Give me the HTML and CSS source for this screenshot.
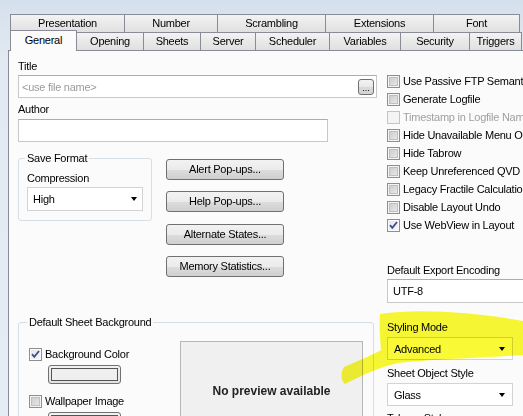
FILE: index.html
```html
<!DOCTYPE html>
<html>
<head>
<meta charset="utf-8">
<link rel="stylesheet" href="styles.css">
</head>
<body>
<div class="window">
  <div class="tabstrip">
    <div class="tabrow">
      <div class="tab t-pres">Presentation</div>
      <div class="tab t-num">Number</div>
      <div class="tab t-scr">Scrambling</div>
      <div class="tab t-ext">Extensions</div>
      <div class="tab t-font">Font</div>
    </div>
    <div class="tabrow">
      <div class="tab t-gen selected">General</div>
      <div class="tab t-open">Opening</div>
      <div class="tab t-sheets">Sheets</div>
      <div class="tab t-server">Server</div>
      <div class="tab t-sched">Scheduler</div>
      <div class="tab t-vars">Variables</div>
      <div class="tab t-sec">Security</div>
      <div class="tab t-trig">Triggers</div>
    </div>
  </div>

  <div class="panel">
    <div class="col-left">
      <div class="label l-title">Title</div>
      <div class="input input-title">
        <span class="placeholder">&lt;use file name&gt;</span>
        <span class="dots-btn">...</span>
      </div>
      <div class="label l-author">Author</div>
      <div class="input input-author"></div>

      <div class="mid-row">
        <fieldset class="group g-save">
          <legend>Save Format</legend>
          <div class="label l-comp">Compression</div>
          <div class="combo combo-high"><span>High</span><span class="arrow"></span></div>
        </fieldset>
        <div class="btn-col">
          <div class="btn">Alert Pop-ups...</div>
          <div class="btn b2">Help Pop-ups...</div>
          <div class="btn b3">Alternate States...</div>
          <div class="btn b2">Memory Statistics...</div>
        </div>
      </div>

      <fieldset class="group g-bg">
        <legend>Default Sheet Background</legend>
        <div class="bg-inner">
          <div class="bg-left">
            <div class="cbrow"><span class="cb checked"><svg width="11" height="11" viewBox="0 0 11 11"><path d="M2 5.2 L4.3 7.8 L9 2" fill="none" stroke="#3b4f8a" stroke-width="1.8"/></svg></span><span>Background Color</span></div>
            <div class="color-btn"><span class="swatch"></span></div>
            <div class="cbrow wall"><span class="cb"></span><span>Wallpaper Image</span></div>
            <div class="color-btn"><span class="swatch"></span></div>
          </div>
          <div class="preview">No preview available</div>
        </div>
      </fieldset>
    </div>

    <div class="col-right">
      <div class="cblist">
        <div class="cbrow"><span class="cb"></span><span>Use Passive FTP Semantics</span></div>
        <div class="cbrow"><span class="cb"></span><span>Generate Logfile</span></div>
        <div class="cbrow disabled"><span class="cb"></span><span>Timestamp in Logfile Name</span></div>
        <div class="cbrow"><span class="cb"></span><span>Hide Unavailable Menu Options</span></div>
        <div class="cbrow"><span class="cb"></span><span>Hide Tabrow</span></div>
        <div class="cbrow"><span class="cb"></span><span>Keep Unreferenced QVD Buffers</span></div>
        <div class="cbrow"><span class="cb"></span><span>Legacy Fractile Calculation</span></div>
        <div class="cbrow"><span class="cb"></span><span>Disable Layout Undo</span></div>
        <div class="cbrow"><span class="cb checked"><svg width="11" height="11" viewBox="0 0 11 11"><path d="M2 5.2 L4.3 7.8 L9 2" fill="none" stroke="#3b4f8a" stroke-width="1.8"/></svg></span><span>Use WebView in Layout</span></div>
      </div>
      <div class="label l-enc">Default Export Encoding</div>
      <div class="input input-enc"><span>UTF-8</span></div>
      <div class="label l-style">Styling Mode</div>
      <div class="combo combo-right"><span>Advanced</span><span class="arrow"></span></div>
      <div class="label l-obj">Sheet Object Style</div>
      <div class="combo combo-right"><span>Glass</span><span class="arrow"></span></div>
      <div class="label l-tabrow">Tabrow Style</div>
    </div>
  </div>

  <svg class="highlight" width="523" height="416" viewBox="0 0 523 416">
    <path d="M380,314 C420,308 480,313 523,321 L523,355 C480,358 425,360 398,363 C380,367 360,376 345,384 C340,380 341,371 344,367 C358,361 372,355 381,350 C380,338 379,325 380,314 Z" fill="#f9f935"/>
  </svg>
</div>
</body>
</html>
```

FILE: styles.css
```css
* { box-sizing: border-box; }
html, body { margin: 0; padding: 0; background: #fbfbfb; }
body {
  font-family: "Liberation Sans", Arial, sans-serif;
  font-size: 11px;
  letter-spacing: -0.25px;
  color: #000;
}
.window {
  position: relative;
  width: 523px;
  height: 416px;
  overflow: hidden;
  background: linear-gradient(#d5e0ed, #e2e9f2 60px, #e6ecf3);
}

/* tabs */
.tabstrip { padding-top: 14px; }
.tabrow { display: flex; height: 18px; padding-left: 10px; }
.tab {
  flex: none;
  height: 18px;
  line-height: 17px;
  text-align: center;
  border: 1px solid #898c95;
  border-bottom: none;
  margin-left: -1px;
  background: linear-gradient(#f3f3f3, #e9e9e9 50%, #e0e0e0);
  white-space: nowrap;
}
.tabrow .tab:first-child { margin-left: 0; }
.t-pres { width: 115px; }
.t-num { width: 94px; }
.t-scr { width: 109px; }
.t-ext { width: 109px; }
.t-font { width: 87px; }
.tabrow .t-gen { margin-left: -2px; }
.t-gen { width: 67px; }
.t-open { width: 68px; }
.t-sheets { width: 58px; }
.t-server { width: 56px; }
.t-sched { width: 75px; }
.t-vars { width: 72px; }
.t-sec { width: 70px; }
.t-trig { width: 53px; }
.tab.selected {
  position: relative;
  z-index: 2;
  height: 21px;
  margin-top: -2px;
  line-height: 19px;
  background: #fbfbfb;
}

/* panel */
.panel {
  display: flex;
  margin-left: 8px;
  height: 400px;
  padding-left: 9px;
  border-left: 1px solid #898c95;
  border-top: 1px solid #898c95;
  background: #fbfbfb;
}
.col-left { flex: none; width: 358px; }
.col-right { flex: none; width: 200px; margin-left: 11px; }

.label { line-height: 14px; height: 14px; white-space: nowrap; }
.l-title { margin-top: 8px; }
.l-author { margin-top: 4px; }
.l-comp { margin-top: 6px; }

.input {
  display: flex;
  align-items: center;
  height: 23px;
  border: 1px solid #c6c8cc;
  border-top-color: #abadb3;
  background: #ffffff;
  padding-left: 3px;
}
.input-title { margin-top: 2px; width: 359px; padding-right: 2px; }
.placeholder { color: #9c9c9c; flex: 1; }
.dots-btn {
  width: 16px;
  height: 16px;
  border: 1px solid #707070;
  border-radius: 3px;
  background: linear-gradient(#f4f4f4, #e8e8e8 50%, #dadada 51%, #d2d2d2);
  font-size: 9px;
  line-height: 16px;
  text-align: center;
  letter-spacing: 0;
}
.input-author { margin-top: 3px; width: 310px; }

.mid-row { display: flex; align-items: flex-start; margin-top: 9px; }

fieldset.group {
  margin: 0;
  min-width: 0;
  border: 1px solid #d5dfe5;
  border-radius: 3px;
}
fieldset.group legend {
  padding: 0 2px;
  margin-left: -2px;
  line-height: 14px;
}
fieldset.g-save { width: 134px; padding: 0 8px 9px 8px; }

.combo {
  display: flex;
  align-items: center;
  justify-content: space-between;
  border: 1px solid #d3d3d3;
  background: #ffffff;
  white-space: nowrap;
}
.combo-high { margin-top: 2px; width: 116px; height: 24px; padding: 0 5px 0 5px; }
.arrow {
  width: 0;
  height: 0;
  border-left: 3.5px solid transparent;
  border-right: 3.5px solid transparent;
  border-top: 4px solid #000;
}

.btn-col { margin-left: 14px; margin-top: 8px; }
.btn {
  width: 118px;
  height: 21px;
  line-height: 19px;
  text-align: center;
  border: 1px solid #707070;
  border-radius: 3px;
  background: linear-gradient(#f2f2f2, #ebebeb 50%, #dddddd 51%, #cfcfcf);
  white-space: nowrap;
}
.btn.b2 { margin-top: 11px; }
.btn.b3 { margin-top: 12px; }

fieldset.g-bg { width: 356px; margin-top: 38px; padding: 12px 10px 0 10px; height: 140px; }
.bg-inner { display: flex; }
.bg-left { flex: none; width: 151px; padding-top: 6px; }

.cbrow { display: flex; align-items: center; height: 14px; white-space: nowrap; }
.cb {
  flex: none;
  width: 13px;
  height: 13px;
  margin-right: 3px;
  border: 1px solid #8e8f8f;
  background: linear-gradient(135deg, #c9c9c9, #dedede 60%, #eeeeee);
  box-shadow: inset 0 0 0 1px #f4f4f4, inset 0 0 0 2px #c0c0c0;
  display: flex;
  align-items: center;
  justify-content: center;
}
.cb.checked {
  background: linear-gradient(135deg, #e6e6e6, #f7f7f7);
  box-shadow: inset 0 0 0 1px #fafafa;
}
.cbrow.disabled { color: #a0a0a0; }
.cbrow.disabled .cb {
  border-color: #c4c4c4;
  background: #f4f4f4;
  box-shadow: none;
}
.wall { margin-top: 10px; }

.color-btn {
  margin-left: 19px;
  margin-top: 4px;
  width: 73px;
  height: 19px;
  border: 1px solid #707070;
  border-radius: 3px;
  background: linear-gradient(#f2f2f2, #e3e3e3);
  padding: 2px;
}
.swatch {
  display: block;
  height: 100%;
  border: 1px solid #555555;
  background: #efefef;
}

.preview {
  flex: none;
  width: 183px;
  height: 100px;
  border: 1px solid #b7b7b7;
  background: #f0f0f0;
  display: flex;
  align-items: center;
  justify-content: center;
  font-weight: bold;
  font-size: 12px;
  letter-spacing: 0;
  color: #222;
}

/* right column */
.cblist { margin-top: 21px; }
.cblist .cbrow { height: 18px; }
.cblist .cb { margin-right: 3px; }

.l-enc { margin-top: 29px; }
.input-enc { margin-top: 2px; width: 150px; height: 24px; padding-left: 5px; }
.l-style { margin-top: 17px; }
.combo-right { margin-top: 3px; width: 126px; height: 23px; padding: 0 7px 0 6px; }
.l-obj { margin-top: 6px; }
.l-tabrow { margin-top: 5px; }

.highlight {
  position: absolute;
  left: 0;
  top: 0;
  pointer-events: none;
  mix-blend-mode: multiply;
}
```
